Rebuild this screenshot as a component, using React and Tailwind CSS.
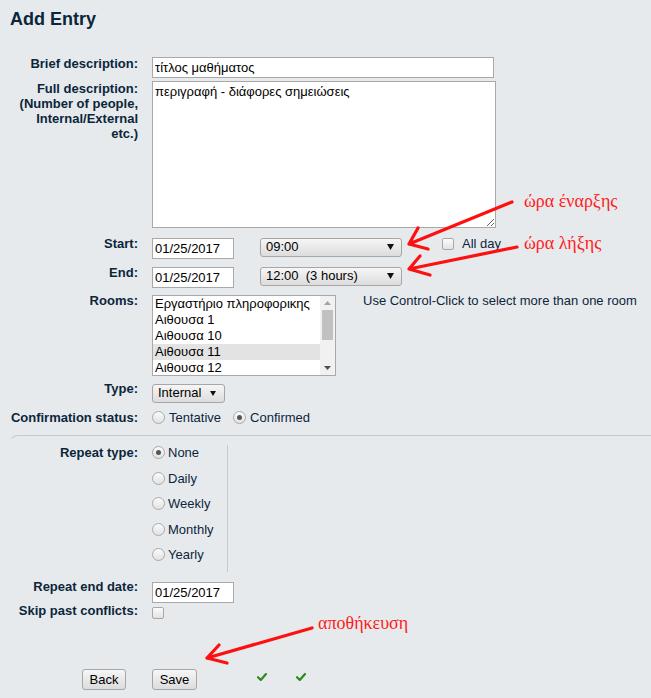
import React from 'react';

const rooms = ['Εργαστήριο πληροφορικης', 'Αιθουσα 1', 'Αιθουσα 10', 'Αιθουσα 11', 'Αιθουσα 12'];
const repeatTypes = ['None', 'Daily', 'Weekly', 'Monthly', 'Yearly'];

function Row({ label, className = '', labelClass = '', children }) {
  return (
    <div className={`flex items-start ${className}`}>
      <div className={`w-[128px] shrink-0 text-right text-[13px] leading-[15px] font-bold ${labelClass}`}>{label}</div>
      <div className="ml-[14px] flex items-start">{children}</div>
    </div>
  );
}

function Radio({ checked }) {
  return (
    <span className="flex h-[13px] w-[13px] shrink-0 items-center justify-center rounded-full border border-[#a9a9a9] bg-linear-to-b from-[#fbfbfb] to-[#e2e2e2]">
      {checked && <span className="h-[5px] w-[5px] rounded-full bg-[#555]" />}
    </span>
  );
}

function Checkbox({ className = '' }) {
  return (
    <span className={`block h-[12px] w-[12px] shrink-0 rounded-[2px] border border-[#a9a9a9] bg-linear-to-b from-[#fbfbfb] to-[#e2e2e2] ${className}`} />
  );
}

function Arrow({ className = '' }) {
  return (
    <svg width="7" height="6" viewBox="0 0 7 6" className={`absolute ${className}`}>
      <path d="M0 0H7L3.5 6Z" fill="#111" />
    </svg>
  );
}

function Select({ value, width, children }) {
  return (
    <div className={`relative h-[19px] ${width} rounded-[3px] border border-[#a6a6a6] bg-linear-to-b from-[#f6f6f6] to-[#dcdcdc] pl-[5px] text-[13px] leading-[15px] text-black`}>
      {value}
      {children}
    </div>
  );
}

function Check() {
  return (
    <svg width="10" height="8" viewBox="0 0 10 8">
      <path d="M1 4.2 L3.8 7 L9 1" fill="none" stroke="#2e8b1f" strokeWidth="2.2" strokeLinecap="round" strokeLinejoin="round" />
    </svg>
  );
}

const inputCls = 'h-[21px] border border-[#a9a9a9] bg-white px-[2px] text-[13px] text-black outline-none';

export default function App() {
  return (
    <div className="relative min-h-screen w-full overflow-hidden bg-[#e7eaed] font-['Liberation_Sans',Arial,sans-serif] text-[#0b263b]">
      <h2 className="pl-[10px] pt-[8px] text-[18px] leading-[22px] font-bold">Add Entry</h2>

      <div className="pl-[10px]">
        <Row label="Brief description:" className="mt-[27px]" labelClass="-mt-[1px]">
          <input readOnly defaultValue="τίτλος μαθήματος" className={`${inputCls} w-[342px]`} />
        </Row>

        <Row
          label={<>Full description:<br />(Number of people,<br />Internal/External<br />etc.)</>}
          className="mt-[3px]"
        >
          <textarea
            readOnly
            defaultValue="περιγραφή - διάφορες σημειώσεις"
            className="h-[147px] w-[344px] border border-[#a9a9a9] bg-white px-[2px] pt-[2px] text-[13px] leading-[15px] text-black outline-none"
          />
        </Row>

        <Row label="Start:" className="mt-[10px]" labelClass="-mt-[2px]">
          <input readOnly defaultValue="01/25/2017" className={`${inputCls} w-[82px]`} />
          <div className="ml-[26px]">
            <Select value="09:00" width="w-[142px]">
              <Arrow className="right-[7px] top-[5px]" />
            </Select>
          </div>
          <Checkbox className="ml-[40px]" />
          <span className="-mt-[2px] ml-[8px] text-[13px] leading-[15px]">All day</span>
        </Row>

        <Row label="End:" className="mt-[8px]" labelClass="-mt-[2px]">
          <input readOnly defaultValue="01/25/2017" className={`${inputCls} w-[82px]`} />
          <div className="ml-[26px]">
            <Select value="12:00  (3 hours)" width="w-[142px] whitespace-pre">
              <Arrow className="right-[7px] top-[5px]" />
            </Select>
          </div>
        </Row>

        <Row label="Rooms:" className="mt-[7px]" labelClass="-mt-[2px]">
          <div className="flex h-[81px] w-[184px] overflow-hidden border border-[#a9a9a9] bg-white">
            <div className="flex-1">
              {rooms.map((r, i) => (
                <div key={r} className={`h-[16px] pl-[2px] text-[13px] leading-[16px] text-black ${i === 3 ? 'bg-[#e3e3e3]' : ''}`}>
                  {r}
                </div>
              ))}
            </div>
            <div className="relative w-[15px] bg-[#f1f1f1]">
              <svg width="7" height="4" viewBox="0 0 7 4" className="absolute left-[4px] top-[5px]">
                <path d="M0 4H7L3.5 0Z" fill="#a3a3a3" />
              </svg>
              <div className="absolute left-[2px] top-[14px] h-[30px] w-[11px] bg-[#c1c1c1]" />
              <svg width="7" height="4" viewBox="0 0 7 4" className="absolute bottom-[5px] left-[4px]">
                <path d="M0 0H7L3.5 4Z" fill="#505050" />
              </svg>
            </div>
          </div>
          <span className="-mt-[2px] ml-[27px] text-[13px] leading-[15px]">Use Control-Click to select more than one room</span>
        </Row>

        <Row label="Type:" className="mt-[8px]" labelClass="-mt-[3px]">
          <Select value="Internal" width="w-[73px] leading-[16px]">
            <svg width="6" height="5" viewBox="0 0 6 5" className="absolute right-[8px] top-[6px]">
              <path d="M0 0H6L3 5Z" fill="#111" />
            </svg>
          </Select>
        </Row>

        <Row label="Confirmation status:" className="mt-[7px]">
          <div className="flex h-[15px] items-center text-[13px] leading-[15px]">
            <Radio />
            <span className="ml-[4px]">Tentative</span>
            <span className="ml-[12px]" />
            <Radio checked />
            <span className="ml-[4px]">Confirmed</span>
          </div>
        </Row>
      </div>

      <div className="mt-[10px] ml-[8px] rounded-tl-[10px] border-t border-l border-t-[#c5cacf] border-l-transparent pt-[9px] pl-[1px]">
        <Row label="Repeat type:">
          <div className="flex h-[127px] w-[76px] flex-col gap-[10.5px] border-r border-[#c5cacf]">
            {repeatTypes.map((t, i) => (
              <div key={t} className="flex h-[15px] items-center text-[13px] leading-[15px]">
                <Radio checked={i === 0} />
                <span className="ml-[3px]">{t}</span>
              </div>
            ))}
          </div>
        </Row>

        <Row label="Repeat end date:" className="mt-[10px]" labelClass="-mt-[3px]">
          <input readOnly defaultValue="01/25/2017" className={`${inputCls} w-[82px]`} />
        </Row>

        <Row label="Skip past conflicts:">
          <Checkbox className="mt-[4px]" />
        </Row>

        <div className="mt-[50px] flex items-start">
          <div className="flex w-[128px] justify-end pr-[12px]">
            <button className="h-[21px] w-[44px] rounded-[3px] border border-[#a6a6a6] bg-linear-to-b from-[#f6f6f6] to-[#dcdcdc] text-[13px] leading-[19px] text-black">
              Back
            </button>
          </div>
          <button className="ml-[14px] h-[21px] w-[45px] rounded-[3px] border border-[#a6a6a6] bg-linear-to-b from-[#f6f6f6] to-[#dcdcdc] text-[13px] leading-[19px] text-black">
            Save
          </button>
          <span className="ml-[60px] mt-[4px]"><Check /></span>
          <span className="ml-[29px] mt-[4px]"><Check /></span>
        </div>
      </div>

      {/* annotations drawn over the form */}
      <div className="pointer-events-none absolute inset-0 font-['Liberation_Serif','Times_New_Roman',serif] text-[18px] leading-[20px] text-[#ff1a1a]">
        <svg width="651" height="698" className="absolute left-0 top-0">
          <g fill="none" stroke="#ff1010" strokeWidth="3.2" strokeLinecap="round" strokeLinejoin="round">
            <path d="M512 202 L409 244 M418 228 L409 244 L428 249" />
            <path d="M517 247 L409 269 M420 256 L409 269 L430 275" />
            <path d="M312 628 L207 658 M219 645 L207 658 L227 663" />
          </g>
        </svg>
        <span className="absolute left-[524px] top-[191px]">ώρα έναρξης</span>
        <span className="absolute left-[524px] top-[233px]">ώρα λήξης</span>
        <span className="absolute left-[318px] top-[613px]">αποθήκευση</span>
      </div>
    </div>
  );
}
